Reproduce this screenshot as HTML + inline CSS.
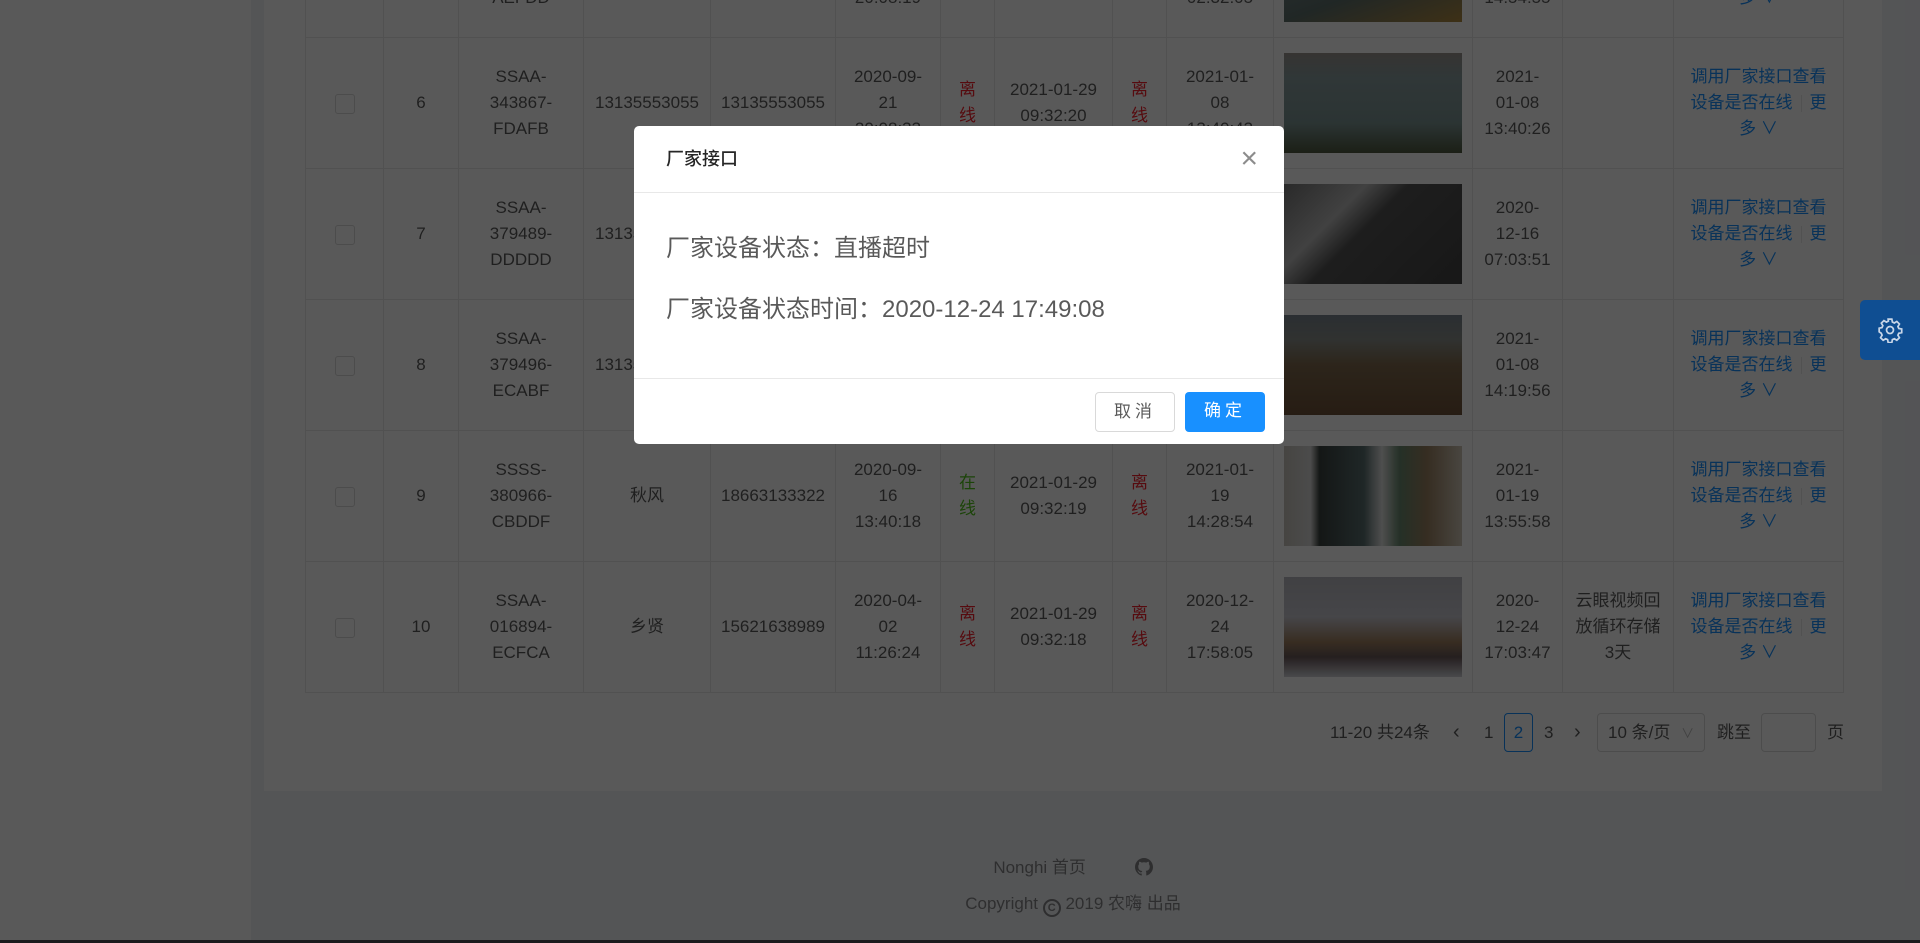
<!DOCTYPE html>
<html><head><meta charset="utf-8"><style>
*{box-sizing:border-box;margin:0;padding:0}
body{width:1920px;height:943px;overflow:hidden;background:#f0f2f5;font-family:"Liberation Sans","Noto Sans CJK SC",sans-serif;color:rgba(0,0,0,.65);position:relative}
.side{position:absolute;left:0;top:0;width:251px;height:943px;background:#fff}
.card{position:absolute;left:264px;top:0;width:1618px;height:791px;background:#fff}
table{position:absolute;left:305px;top:-94px;border-collapse:collapse;table-layout:fixed;font-size:17px;line-height:26px}
td{border:1px solid #e8e8e8;text-align:center;vertical-align:middle;height:131px;padding:0 4px;overflow:hidden;white-space:nowrap}
.cb{display:inline-block;width:20px;height:20px;border:1px solid #d9d9d9;border-radius:3px;background:#fff;vertical-align:middle}
.r{color:#f5222d}.g{color:#52c41a}.l{color:#1890ff}
.sep{display:inline-block;width:1px;height:17px;background:#e8e8e8;margin:0 8px;vertical-align:middle}
.img{width:178px;height:100px;margin:0 auto}
.pg{position:absolute;top:713px;font-size:17px;line-height:39px;color:rgba(0,0,0,.65)}
.foot{position:absolute;left:264px;width:1618px;text-align:center;font-size:17px;color:rgba(0,0,0,.45)}
.mask{position:absolute;left:0;top:0;width:1920px;height:943px;background:rgba(0,0,0,.65)}
.modal{position:absolute;left:634px;top:126px;width:650px;height:318px;background:#fff;border-radius:5px}
.mh{height:67px;border-bottom:1px solid #e8e8e8;padding:0 32px;font-size:18px;line-height:66px;color:rgba(0,0,0,.85);font-weight:500;position:relative}
.mb{padding:0 32px;height:185px;font-size:24px;color:rgba(0,0,0,.65);position:relative}
.mf{border-top:1px solid #e8e8e8;height:66px;position:relative}
.btn{position:absolute;top:13px;width:80px;height:40px;border-radius:4px;font-size:17px;line-height:38px;text-align:center;letter-spacing:4px}
</style></head><body>
<div class="side"></div>
<div class="card"></div>
<table>
<colgroup><col style="width:78px"><col style="width:75px"><col style="width:125px"><col style="width:127px"><col style="width:125px"><col style="width:105px"><col style="width:54px"><col style="width:118px"><col style="width:54px"><col style="width:107px"><col style="width:199px"><col style="width:90px"><col style="width:111px"><col style="width:170px"></colgroup>
<tr><td><span class="cb"></span></td><td>5</td><td>SSAA-<br>343866-<br>AEFDD</td><td>13135553055</td><td>13135553055</td><td>2020-09-<br>21<br>20:08:19</td><td class="r">离<br>线</td><td>2021-01-29<br>09:32:05</td><td class="r">离<br>线</td><td>2021-01-<br>08<br>02:32:05</td><td><div class="img" style="background:linear-gradient(160deg,#8a9a9c,#5d6f6c 60%,#b08a40)"></div></td><td>2021-<br>01-08<br>14:54:55</td><td></td><td class="l">调用厂家接口查看<br>设备是否在线<span class="sep"></span>更<br>多 ∨</td></tr>
<tr><td><span class="cb"></span></td><td>6</td><td>SSAA-<br>343867-<br>FDAFB</td><td>13135553055</td><td>13135553055</td><td>2020-09-<br>21<br>20:08:33</td><td class="r">离<br>线</td><td>2021-01-29<br>09:32:20</td><td class="r">离<br>线</td><td>2021-01-<br>08<br>13:40:43</td><td><div class="img" style="background:linear-gradient(180deg,#9b9590 0,#8a9ea0 25%,#7c9593 70%,#4f5a40)"></div></td><td>2021-<br>01-08<br>13:40:26</td><td></td><td class="l">调用厂家接口查看<br>设备是否在线<span class="sep"></span>更<br>多 ∨</td></tr>
<tr><td><span class="cb"></span></td><td>7</td><td>SSAA-<br>379489-<br>DDDDD</td><td>13135553055</td><td>13135553055</td><td>2020-09-<br>21<br>20:08:33</td><td class="r">离<br>线</td><td>2021-01-29<br>09:32:20</td><td class="r">离<br>线</td><td>2021-01-<br>08<br>13:40:43</td><td><div class="img" style="background:linear-gradient(135deg,#777 0,#bbb 30%,#555 45%,#444 100%)"></div></td><td>2020-<br>12-16<br>07:03:51</td><td></td><td class="l">调用厂家接口查看<br>设备是否在线<span class="sep"></span>更<br>多 ∨</td></tr>
<tr><td><span class="cb"></span></td><td>8</td><td>SSAA-<br>379496-<br>ECABF</td><td>13135553055</td><td>13135553055</td><td>2020-09-<br>21<br>20:08:33</td><td class="r">离<br>线</td><td>2021-01-29<br>09:32:20</td><td class="r">离<br>线</td><td>2021-01-<br>08<br>13:40:43</td><td><div class="img" style="background:linear-gradient(180deg,#7a8590 0,#8b8f8a 25%,#806a4e 50%,#6e5238 100%)"></div></td><td>2021-<br>01-08<br>14:19:56</td><td></td><td class="l">调用厂家接口查看<br>设备是否在线<span class="sep"></span>更<br>多 ∨</td></tr>
<tr><td><span class="cb"></span></td><td>9</td><td>SSSS-<br>380966-<br>CBDDF</td><td>秋风</td><td>18663133322</td><td>2020-09-<br>16<br>13:40:18</td><td class="g">在<br>线</td><td>2021-01-29<br>09:32:19</td><td class="r">离<br>线</td><td>2021-01-<br>19<br>14:28:54</td><td><div class="img" style="background:linear-gradient(90deg,#c8c4bc 0,#d8d8d8 15%,#3a4240 20%,#5a7070 45%,#e0e0e0 55%,#6a8a70 65%,#9a8060 80%,#d0c8b8 100%)"></div></td><td>2021-<br>01-19<br>13:55:58</td><td></td><td class="l">调用厂家接口查看<br>设备是否在线<span class="sep"></span>更<br>多 ∨</td></tr>
<tr><td><span class="cb"></span></td><td>10</td><td>SSAA-<br>016894-<br>ECFCA</td><td>乡贤</td><td>15621638989</td><td>2020-04-<br>02<br>11:26:24</td><td class="r">离<br>线</td><td>2021-01-29<br>09:32:18</td><td class="r">离<br>线</td><td>2020-12-<br>24<br>17:58:05</td><td><div class="img" style="background:linear-gradient(180deg,#b8b8c0 0,#c8c8d0 40%,#a08060 65%,#6a5a5a 80%,#d0d0d8 100%)"></div></td><td>2020-<br>12-24<br>17:03:47</td><td>云眼视频回<br>放循环存储<br>3天</td><td class="l">调用厂家接口查看<br>设备是否在线<span class="sep"></span>更<br>多 ∨</td></tr>
</table>
<div class="pg" style="left:1330px">11-20 共24条</div>
<div class="pg" style="left:1453px;font-size:20px">‹</div>
<div class="pg" style="left:1484px">1</div>
<div class="pg" style="left:1504px;top:713px;width:29px;height:39px;border:1px solid #1890ff;border-radius:4px;text-align:center;line-height:37px;color:#1890ff">2</div>
<div class="pg" style="left:1544px">3</div>
<div class="pg" style="left:1574px;font-size:20px">›</div>
<div class="pg" style="left:1597px;width:108px;height:39px;border:1px solid #d9d9d9;border-radius:4px;padding-left:10px;line-height:37px">10 条/页 <span style="color:#bbb;font-size:13px;margin-left:6px">∨</span></div>
<div class="pg" style="left:1717px">跳至</div>
<div class="pg" style="left:1761px;width:55px;height:39px;border:1px solid #d9d9d9;border-radius:4px"></div>
<div class="pg" style="left:1827px">页</div>
<div class="foot" style="top:853px">Nonghi 首页 <svg width="18" height="18" viewBox="0 0 16 16" style="margin-left:44px;vertical-align:-3px"><path fill="rgba(0,0,0,.45)" d="M8 0C3.6 0 0 3.6 0 8c0 3.5 2.3 6.5 5.5 7.6.4.1.5-.2.5-.4v-1.4c-2.2.5-2.7-1-2.7-1-.4-.9-.9-1.200-.9-1.200-.7-.5.1-.5.1-.5.8.1 1.200.8 1.200.8.7 1.300 1.900.9 2.300.7.1-.5.3-.9.5-1.100-1.800-.2-3.600-.9-3.600-4 0-.9.3-1.600.8-2.100-.1-.2-.4-1 .1-2.100 0 0 .7-.2 2.200.8.6-.2 1.300-.3 2-.3s1.400.1 2 .3c1.500-1 2.200-.8 2.200-.8.4 1.100.2 1.900.1 2.100.5.6.8 1.300.8 2.100 0 3.100-1.900 3.700-3.600 3.900.3.3.5.8.5 1.500v2.200c0 .2.1.5.6.4C13.700 14.500 16 11.500 16 8c0-4.400-3.600-8-8-8z"/></svg></div>
<div class="foot" style="top:889px">Copyright <span style="display:inline-block;width:18px;height:18px;border:2px solid rgba(0,0,0,.45);border-radius:50%;font-size:11px;line-height:14px;vertical-align:-2px;font-weight:bold">C</span> 2019 农嗨 出品</div>
<div class="mask"></div>
<div style="position:absolute;left:0;top:940px;width:1920px;height:3px;background:#1b1b1d"></div>
<div style="position:absolute;left:1860px;top:300px;width:60px;height:60px;background:#0f4e92;border-radius:5px 0 0 5px">
<svg width="26" height="26" viewBox="0 0 24 24" style="position:absolute;left:17px;top:17px" fill="none" stroke="#c8d6e8" stroke-width="1.6"><circle cx="12" cy="12" r="3.2"/><path d="M10.3 2h3.4l.5 2.6 1.8.9 2.3-1.4 2.4 2.4-1.4 2.3.8 1.8 2.7.5v3.4l-2.7.5-.8 1.8 1.4 2.3-2.4 2.4-2.3-1.4-1.8.8-.5 2.7h-3.4l-.5-2.7-1.8-.8-2.3 1.4-2.4-2.4 1.4-2.3-.8-1.8L2 13.7v-3.4l2.6-.5.8-1.8L4 5.7l2.4-2.4 2.3 1.4 1.8-.9z"/></svg></div>
<div class="modal">
<div class="mh">厂家接口<span style="position:absolute;right:26px;top:0;font-size:30px;font-weight:300;color:rgba(0,0,0,.45)">×</span></div>
<div class="mb"><div style="position:absolute;top:35px">厂家设备状态：直播超时</div><div style="position:absolute;top:96px">厂家设备状态时间：2020-12-24 17:49:08</div></div>
<div class="mf"><div class="btn" style="left:461px;border:1px solid #d9d9d9;color:rgba(0,0,0,.65)">取消</div><div class="btn" style="left:551px;background:#1890ff;color:#fff">确定</div></div>
</div>
</body></html>
